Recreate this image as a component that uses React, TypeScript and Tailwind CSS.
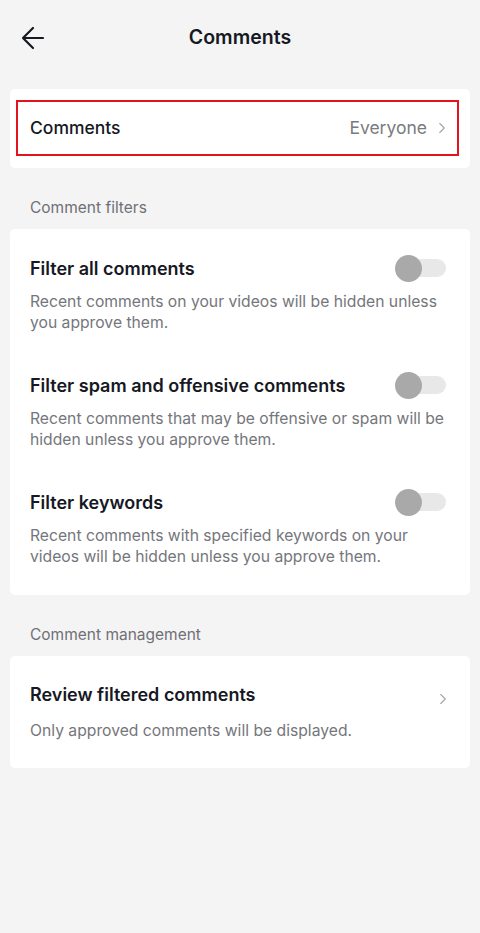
import { ChevronRight } from 'lucide-react';

const font = { fontFamily: 'Inter, "Noto Sans", sans-serif' };

interface FilterItem {
    title: string;
    description: string;
}

const filters: FilterItem[] = [
    {
        title: 'Filter all comments',
        description:
            'Recent comments on your videos will be hidden unless you approve them.',
    },
    {
        title: 'Filter spam and offensive comments',
        description:
            'Recent comments that may be offensive or spam will be hidden unless you approve them.',
    },
    {
        title: 'Filter keywords',
        description:
            'Recent comments with specified keywords on your videos will be hidden unless you approve them.',
    },
];

function BackArrow() {
    return (
        <svg width="24" height="24" viewBox="0 0 24 24" fill="none">
            <path
                d="M22 12H2M12 2L2 12l10 10"
                stroke="#161823"
                strokeWidth="2.2"
                strokeLinecap="round"
                strokeLinejoin="round"
            />
        </svg>
    );
}

function Toggle() {
    return (
        <div className="relative w-[51px] h-[27px] shrink-0">
            <div className="absolute left-[5px] top-[4.5px] w-[46px] h-[18px] rounded-full bg-[#e8e8e8]" />
            <div className="absolute left-0 top-0 w-[27px] h-[27px] rounded-full bg-[#a9a9a9]" />
        </div>
    );
}

function SectionLabel({ children }: { children: string }) {
    return (
        <div className="pl-[30px] pt-[30px] pb-[11px] text-[15.5px] leading-[20px] text-[#6f7076]">
            {children}
        </div>
    );
}

export default function App() {
    return (
        <div className="min-h-[933px] bg-[#f4f4f4] text-[#161823]" style={font}>
            {/* Header */}
            <div className="relative h-[76px] flex items-center justify-center">
                <div className="absolute left-[21px] top-[26px]">
                    <BackArrow />
                </div>
                <h1 className="text-[19.5px] font-semibold">Comments</h1>
            </div>

            {/* Comments visibility */}
            <div className="mx-[10px] mt-[13px] bg-white rounded-[5px] pl-[6px] pr-[11px] pt-[11px] pb-[12px]">
                <div className="h-[56px] border-2 border-[#e3141e] flex items-center justify-between pl-[12px] pr-[6px]">
                    <span className="text-[17.5px] font-medium">Comments</span>
                    <div className="flex items-center gap-[6px] text-[#7a7b80]">
                        <span className="text-[17.5px]">Everyone</span>
                        <ChevronRight size={18} strokeWidth={1.5} color="#a6a6a6" />
                    </div>
                </div>
            </div>

            <SectionLabel>Comment filters</SectionLabel>

            <div className="mx-[10px] bg-white rounded-[5px] pl-[20px] pr-[24px] pt-[28px] pb-[28px] flex flex-col gap-[41px]">
                {filters.map((item) => (
                    <div key={item.title}>
                        <div className="flex items-center justify-between h-[22px]">
                            <span className="text-[18px] font-semibold">{item.title}</span>
                            <Toggle />
                        </div>
                        <p className="mt-[12px] text-[15.7px] leading-[21px] text-[#75767b]">
                            {item.description}
                        </p>
                    </div>
                ))}
            </div>

            <SectionLabel>Comment management</SectionLabel>

            <div className="mx-[10px] bg-white rounded-[5px] pl-[20px] pr-[18px] pt-[28px] pb-[27px] flex items-start justify-between">
                <div>
                    <div className="text-[18px] font-semibold leading-[22px]">
                        Review filtered comments
                    </div>
                    <p className="mt-[14px] text-[15.7px] leading-[21px] text-[#75767b]">
                        Only approved comments will be displayed.
                    </p>
                </div>
                <div className="pt-[6px]">
                    <ChevronRight size={18} strokeWidth={1.5} color="#a6a6a6" />
                </div>
            </div>
        </div>
    );
}
